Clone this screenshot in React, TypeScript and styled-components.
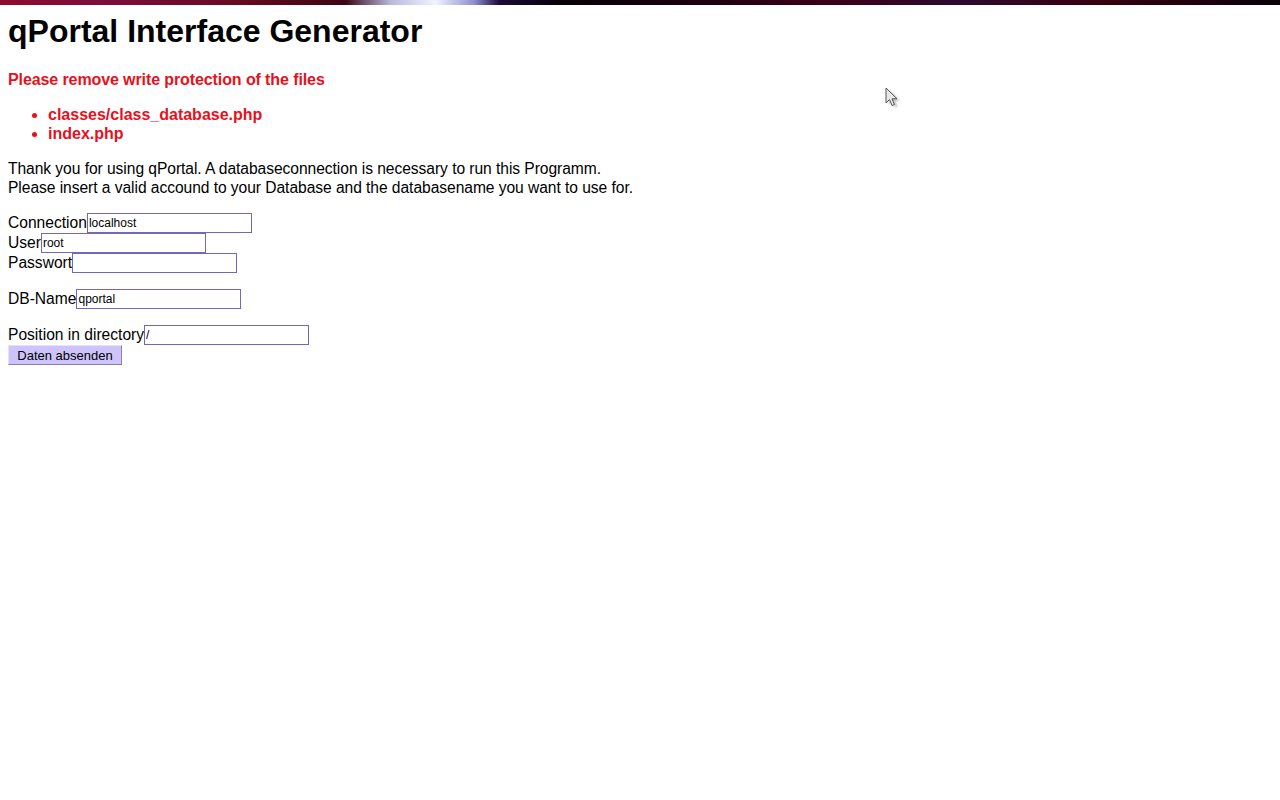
import React from "react";
import styled, { createGlobalStyle } from "styled-components";

const GlobalStyle = createGlobalStyle`
  html, body {
    margin: 0;
    padding: 0;
    background: #ffffff;
  }
  body {
    font-family: "Liberation Sans", Arial, sans-serif;
    color: #000000;
  }
`;

const fields = [
  { label: "Connection", value: "localhost" },
  { label: "User", value: "root" },
  { label: "Passwort", value: "" },
];

export default function App() {
  return (
    <>
      <GlobalStyle />
      <TopBar />
      <Page>
        <Title>qPortal Interface Generator</Title>
        <Warning>Please remove write protection of the files</Warning>
        <FileList>
          <li>classes/class_database.php</li>
          <li>index.php</li>
        </FileList>
        <Intro>
          Thank you for using qPortal. A databaseconnection is necessary to run this Programm.
          <br />
          Please insert a valid accound to your Database and the databasename you want to use for.
        </Intro>
        <Form onSubmit={(e) => e.preventDefault()}>
          <Group>
            {fields.map((f) => (
              <Row key={f.label}>
                <Label>{f.label}</Label>
                <Input type={f.label === "Passwort" ? "password" : "text"} defaultValue={f.value} />
              </Row>
            ))}
          </Group>
          <Group>
            <Row>
              <Label>DB-Name</Label>
              <Input defaultValue="qportal" />
            </Row>
          </Group>
          <Group>
            <Row>
              <Label>Position in directory</Label>
              <Input defaultValue="/" />
            </Row>
            <Submit type="submit">Daten absenden</Submit>
          </Group>
        </Form>
      </Page>
      <Cursor width="22" height="26" viewBox="0 0 22 26">
        <defs>
          <filter id="blur" x="-50%" y="-50%" width="200%" height="200%">
            <feGaussianBlur stdDeviation="1.3" />
          </filter>
        </defs>
        <path d="M4 3 L4 18 L7.5 14.5 L10 20.5 L12.5 19.5 L10 13.8 L15 13.8 Z" fill="#000" opacity="0.25" filter="url(#blur)" />
        <path d="M1 1 L1 16 L4.5 12.5 L7 18.5 L9.5 17.5 L7 11.8 L12 11.8 Z" fill="#e8e8e8" stroke="#555" strokeWidth="1" strokeLinejoin="round" />
      </Cursor>
    </>
  );
}

const TopBar = styled.div`
  height: 5px;
  background: linear-gradient(
    90deg,
    #8e0c30 0%,
    #7c0d3c 8%,
    #6a0a24 18%,
    #3c0612 27%,
    #b8b8dc 30.5%,
    #f2f2ff 34%,
    #9090d0 37%,
    #1a0c3a 39%,
    #060006 44%,
    #1e000c 55%,
    #3c0018 65%,
    #2c0a2e 75%,
    #380010 85%,
    #1c000c 95%,
    #050005 100%
  );
`;

const Page = styled.div`
  padding: 0 8px;
`;

const Title = styled.h1`
  margin: 8px 0 0;
  font-size: 32px;
  line-height: 37px;
  font-weight: bold;
`;

const Warning = styled.p`
  margin: 20px 0 0;
  color: #e8101c;
  font-size: 16px;
  line-height: 19px;
  font-weight: bold;
  letter-spacing: -0.1px;
`;

const FileList = styled.ul`
  margin: 16px 0 0;
  padding-left: 40px;
  color: #e8101c;
  font-size: 16px;
  line-height: 19px;
  font-weight: bold;
`;

const Intro = styled.p`
  margin: 16px 0 0;
  font-size: 15.6px;
  line-height: 19px;
  letter-spacing: -0.05px;
`;

const Form = styled.form`
  margin-top: 16px;
  display: flex;
  flex-direction: column;
  gap: 16px;
`;

const Group = styled.div`
  display: flex;
  flex-direction: column;
  align-items: flex-start;
`;

const Row = styled.div`
  display: flex;
  align-items: center;
  height: 20px;
`;

const Label = styled.span`
  font-size: 15.6px;
  line-height: 20px;
`;

const Input = styled.input`
  box-sizing: border-box;
  width: 165px;
  height: 20px;
  margin: 0;
  padding: 0 1px;
  border: 1px solid #7466b8;
  background: #ffffff;
  font-family: "Liberation Sans", Arial, sans-serif;
  font-size: 12px;
  color: #000;
  outline: none;
`;

const Submit = styled.button`
  box-sizing: border-box;
  height: 20px;
  width: 114px;
  margin: 0;
  padding: 0;
  background: #ccc4fa;
  border: 1px solid;
  border-color: #e4e0ff #8a80b8 #8a80b8 #e4e0ff;
  font-family: "Liberation Sans", Arial, sans-serif;
  font-size: 13px;
  color: #000;
  cursor: pointer;
`;

const Cursor = styled.svg`
  position: absolute;
  left: 885px;
  top: 87px;
  pointer-events: none;
`;
